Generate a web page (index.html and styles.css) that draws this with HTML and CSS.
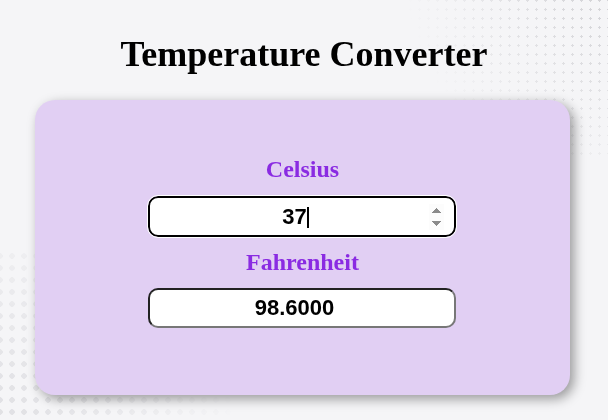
FILE: index.html
```html
<!DOCTYPE html>
<html lang="en">
<head>
<meta charset="utf-8">
<title>Temperature Converter</title>
<link rel="stylesheet" href="styles.css">
</head>
<body>
  <div class="dots dots-tr"></div>
  <div class="dots dots-bl"></div>
  <h1 class="title">Temperature Converter</h1>
  <div class="card">
    <label class="label" for="celsius">Celsius</label>
    <div class="field-wrap">
      <input class="field field-active" id="celsius" type="number" value="37">
      <span class="caret"></span>
    </div>
    <label class="label" for="fahrenheit">Fahrenheit</label>
    <input class="field field-result" id="fahrenheit" type="number" value="98.6000" readonly>
  </div>
</body>
</html>
```
FILE: styles.css
```css
html, body {
  height: 100%;
}
body {
  margin: 0;
  padding-top: 34px;
  box-sizing: border-box;
  background: #f5f5f7;
  font-family: "Liberation Serif", "Times New Roman", serif;
  overflow: hidden;
  position: relative;
}
.dots {
  position: fixed;
  pointer-events: none;
  z-index: 0;
}
.dots-tr {
  top: -40px;
  right: -40px;
  width: 260px;
  height: 200px;
  background-image: radial-gradient(circle, #c9c9cd 1px, transparent 1.4px);
  background-size: 9px 9px;
  -webkit-mask-image: radial-gradient(circle at 100% 0%, #000 0%, rgba(0,0,0,0.5) 40%, transparent 75%);
  mask-image: radial-gradient(circle at 100% 0%, #000 0%, rgba(0,0,0,0.5) 40%, transparent 75%);
}
.dots-bl {
  bottom: -30px;
  left: -30px;
  width: 300px;
  height: 200px;
  background-image: radial-gradient(circle, #dcdce0 2.5px, transparent 3px);
  background-size: 12px 12px;
  -webkit-mask-image: radial-gradient(circle at 0% 100%, #000 0%, rgba(0,0,0,0.5) 40%, transparent 75%);
  mask-image: radial-gradient(circle at 0% 100%, #000 0%, rgba(0,0,0,0.5) 40%, transparent 75%);
}
.title {
  position: relative;
  z-index: 1;
  margin: 0 0 25px;
  text-align: center;
  font-size: 36px;
  font-weight: bold;
  line-height: 41px;
  color: #000;
}
.card {
  position: relative;
  z-index: 1;
  width: 535px;
  height: 295px;
  box-sizing: border-box;
  margin: 0 0 0 35px;
  padding-top: 56px;
  background: #e1cff3;
  border-radius: 20px;
  box-shadow: 4px 4px 12px rgba(0, 0, 0, 0.38);
  display: flex;
  flex-direction: column;
  align-items: center;
  gap: 12px;
}
.label {
  font-size: 24px;
  font-weight: bold;
  line-height: 27px;
  color: #8a2be2;
}
.field-wrap {
  position: relative;
  margin-top: 1px;
}
.field {
  display: block;
  width: 308px;
  height: 41px;
  box-sizing: border-box;
  margin: 0 0 0 -1px;
  border-radius: 10px;
  background: #fff;
  font-family: "Liberation Sans", Arial, sans-serif;
  font-size: 22px;
  font-weight: bold;
  color: #000;
  text-align: center;
  padding: 0 10px;
}
.field-active {
  border: 2px solid #000;
  outline: 1px solid #fff;
  outline-offset: 0;
}
.field-active::-webkit-inner-spin-button {
  opacity: 1;
  height: 26px;
}
.field-result::-webkit-inner-spin-button {
  opacity: 0;
}
.caret {
  position: absolute;
  left: 158px;
  top: 11px;
  width: 2px;
  height: 21px;
  background: #000;
}
.field-result {
  height: 40px;
  border-style: solid;
  border-width: 2px;
  border-color: #222 #777 #777 #222;
  outline: none;
}
```
